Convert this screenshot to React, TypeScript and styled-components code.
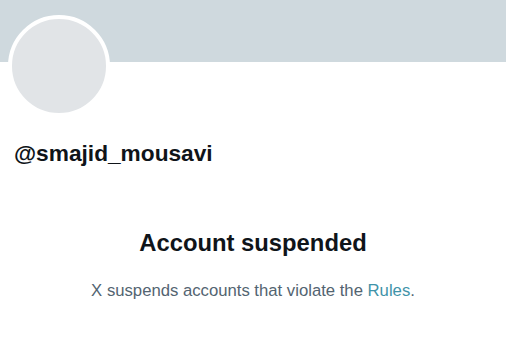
import React from "react";
import styled, { createGlobalStyle } from "styled-components";

const GlobalStyle = createGlobalStyle`
  html, body {
    margin: 0;
    padding: 0;
    background: #ffffff;
  }
  body {
    font-family: "Liberation Sans", Arial, sans-serif;
    -webkit-font-smoothing: antialiased;
  }
`;

const Page = styled.div`
  width: 506px;
  height: 337px;
  background: #ffffff;
  display: flex;
  flex-direction: column;
  overflow: hidden;
`;

const Banner = styled.div`
  height: 62px;
  background: #cfd9de;
  flex-shrink: 0;
`;

const Avatar = styled.div`
  width: 94px;
  height: 94px;
  margin: -47px 0 0 8px;
  border-radius: 50%;
  border: 4px solid #ffffff;
  background: #e1e4e7;
  flex-shrink: 0;
`;

const Handle = styled.h1`
  margin: 22px 0 0 14px;
  font-family: "Liberation Sans", Arial, sans-serif;
  font-weight: 700;
  font-size: 22.7px;
  line-height: 28px;
  color: #0f1419;
  letter-spacing: 0;
`;

const Notice = styled.div`
  display: flex;
  flex-direction: column;
  align-items: center;
  margin-top: 61px;
`;

const Title = styled.h2`
  margin: 0;
  font-family: "Liberation Sans", Arial, sans-serif;
  font-weight: 700;
  font-size: 23.8px;
  line-height: 30px;
  color: #0f1419;
`;

const Message = styled.p`
  margin: 22px 0 0;
  font-family: "Liberation Sans", Arial, sans-serif;
  font-size: 16.7px;
  line-height: 22px;
  color: #536471;
`;

const RulesLink = styled.a`
  color: #3f93a9;
  text-decoration: none;
`;

export default function App() {
  return (
    <>
      <GlobalStyle />
      <Page>
        <Banner />
        <Avatar />
        <Handle>@smajid_mousavi</Handle>
        <Notice>
          <Title>Account suspended</Title>
          <Message>
            X suspends accounts that violate the <RulesLink href="#">Rules</RulesLink>.
          </Message>
        </Notice>
      </Page>
    </>
  );
}
